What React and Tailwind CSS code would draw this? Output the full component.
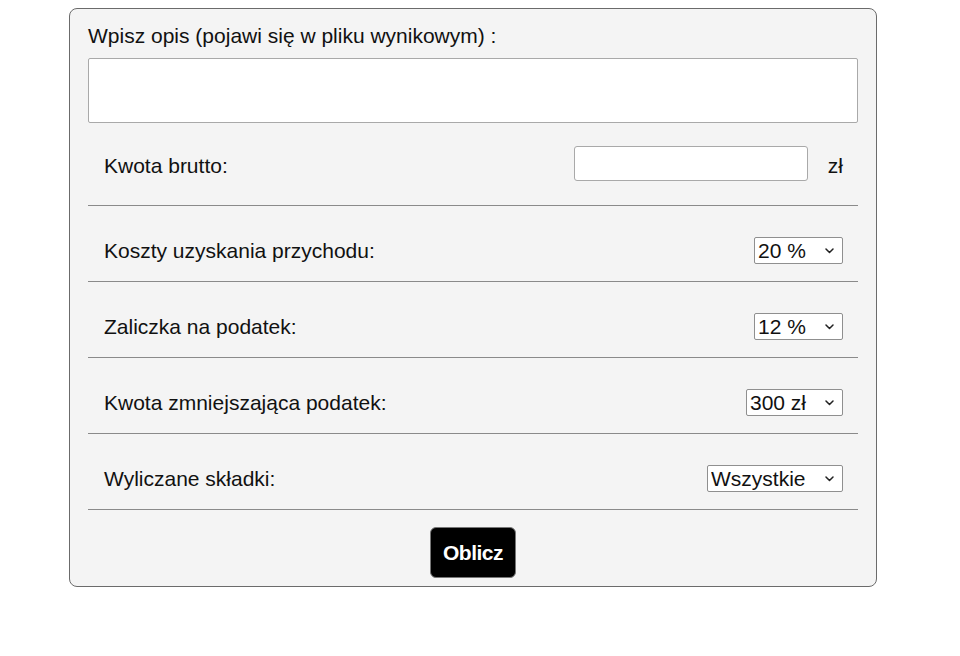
import { useState } from 'react';

const Chevron = () => (
    <svg className="pointer-events-none absolute right-[9px] top-1/2 -translate-y-1/2" width="9" height="6" viewBox="0 0 9 6" fill="none">
        <path d="M1 1l3.5 3.5L8 1" stroke="#222" strokeWidth="1.5" strokeLinecap="round" strokeLinejoin="round" />
    </svg>
);

const Select = ({ value, onChange, options, width }) => (
    <div className="relative flex">
        <select
            value={value}
            onChange={(e) => onChange(e.target.value)}
            className={`${width} h-[27px] appearance-none bg-white border border-[#8f8f8f] rounded-[2px] pl-[3px] pr-[24px] text-[21px] leading-[25px] text-[#111] outline-none`}
        >
            {options.map((o) => (
                <option key={o} value={o}>{o}</option>
            ))}
        </select>
        <Chevron />
    </div>
);

const Row = ({ label, children }) => (
    <div className="flex h-[76px] items-center justify-between border-b border-[#8a8a8a] pl-[16px] pr-[15px] pt-[14px]">
        <span>{label}</span>
        {children}
    </div>
);

const App = () => {
    const [opis, setOpis] = useState('');
    const [kwota, setKwota] = useState('');
    const [koszty, setKoszty] = useState('20 %');
    const [zaliczka, setZaliczka] = useState('12 %');
    const [ulga, setUlga] = useState('300 zł');
    const [skladki, setSkladki] = useState('Wszystkie');

    return (
        <div className="min-h-screen bg-white pt-[8px] font-['Liberation_Sans',Arial,sans-serif] text-[21px] leading-[24px] text-[#111]">
            <div className="ml-[69px] w-[808px] rounded-[8px] border border-[#6b6b6b] bg-[#f4f4f4] px-[18px] pt-[15px] pb-[8px]">
                <label className="block pb-[10px]" htmlFor="opis">
                    Wpisz opis (pojawi się w pliku wynikowym) :
                </label>
                <textarea
                    id="opis"
                    value={opis}
                    onChange={(e) => setOpis(e.target.value)}
                    className="block h-[65px] w-full resize-none rounded-[2px] border border-[#a9a9a9] bg-white outline-none"
                />

                <div className="flex h-[83px] items-center border-b border-[#8a8a8a] pl-[16px] pr-[15px] pb-[2px]">
                    <span className="flex-1 pt-[5px]">Kwota brutto:</span>
                    <input
                        type="text"
                        value={kwota}
                        onChange={(e) => setKwota(e.target.value)}
                        className="h-[35px] w-[234px] rounded-[3px] border border-[#a9a9a9] bg-white px-2 outline-none"
                    />
                    <span className="ml-[20px] pt-[5px]">zł</span>
                </div>

                <Row label="Koszty uzyskania przychodu:">
                    <Select value={koszty} onChange={setKoszty} options={['20 %', '50 %']} width="w-[89px]" />
                </Row>
                <Row label="Zaliczka na podatek:">
                    <Select value={zaliczka} onChange={setZaliczka} options={['12 %', '32 %']} width="w-[89px]" />
                </Row>
                <Row label="Kwota zmniejszająca podatek:">
                    <Select value={ulga} onChange={setUlga} options={['300 zł', '0 zł']} width="w-[97px]" />
                </Row>
                <Row label="Wyliczane składki:">
                    <Select value={skladki} onChange={setSkladki} options={['Wszystkie', 'Brak']} width="w-[136px]" />
                </Row>

                <div className="flex justify-center pt-[17px]">
                    <button
                        type="button"
                        className="h-[51px] w-[86px] rounded-[6px] border border-[#777] bg-black text-[21px] font-bold text-white tracking-[-0.5px]"
                    >
                        Oblicz
                    </button>
                </div>
            </div>
        </div>
    );
};

export default App;
